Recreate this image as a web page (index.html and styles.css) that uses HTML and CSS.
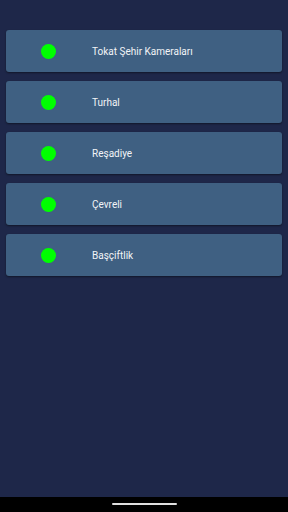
FILE: index.html
```html
<!DOCTYPE html>
<html lang="tr">

<head>
  <meta charset="UTF-8">
  <meta name="viewport" content="width=device-width, initial-scale=1.0">
  <title>Kameralar</title>
  <link rel="stylesheet" href="styles.css">
</head>

<body>
<div id='screen'>
  <div id='camera_list'>
    <div class='camera_item'>
      <span class='status_dot'></span>
      <span class='camera_name'>Tokat Şehir Kameraları</span>
    </div>
    <div class='camera_item'>
      <span class='status_dot'></span>
      <span class='camera_name'>Turhal</span>
    </div>
    <div class='camera_item'>
      <span class='status_dot'></span>
      <span class='camera_name'>Reşadiye</span>
    </div>
    <div class='camera_item'>
      <span class='status_dot'></span>
      <span class='camera_name'>Çevreli</span>
    </div>
    <div class='camera_item'>
      <span class='status_dot'></span>
      <span class='camera_name'>Başçiftlik</span>
    </div>
  </div>
</div>

<div id='nav_bar'>
  <div id='nav_handle'></div>
</div>
</body>

</html>
```

FILE: styles.css
```css
* {
    box-sizing: border-box;
    font-family: Roboto, 'Noto Sans', sans-serif;
}

html, body {
    margin: 0;
    height: 100%;
}

body {
    display: flex;
    flex-direction: column;
    background-color: #1e2749;
}

#screen {
    flex: 1;
    padding: 30px 6px 0 6px;
}

#camera_list {
    display: flex;
    flex-direction: column;
    gap: 9px;
}

.camera_item {
    height: 42px;
    display: flex;
    align-items: center;
    background-color: #3f6082;
    border-radius: 3px;
    box-shadow: 0 1px 2px rgba(0, 0, 0, 0.45);
}

.status_dot {
    width: 15px;
    height: 15px;
    margin-left: 35px;
    border-radius: 50%;
    background-color: #00ff00;
}

.camera_name {
    margin-left: 36px;
    font-size: 10px;
    font-weight: 400;
    color: #f2f4f7;
}

#nav_bar {
    height: 15px;
    background-color: #000;
    display: flex;
    justify-content: center;
    padding-top: 6px;
}

#nav_handle {
    width: 65px;
    height: 2px;
    border-radius: 1px;
    background-color: #e0e0e0;
}
```
